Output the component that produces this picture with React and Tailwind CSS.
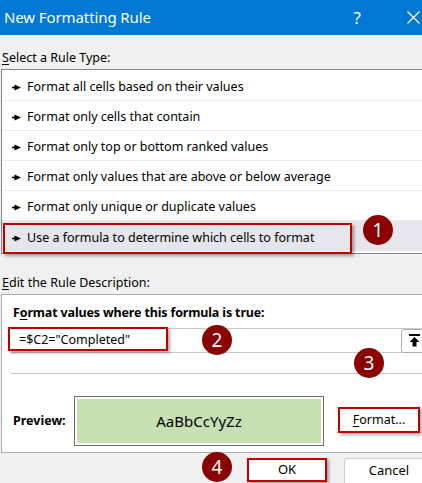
import React from 'react';

const RULES = [
  'Format all cells based on their values',
  'Format only cells that contain',
  'Format only top or bottom ranked values',
  'Format only values that are above or below average',
  'Format only unique or duplicate values',
  'Use a formula to determine which cells to format',
];

function Bullet() {
  return (
    <svg width="9" height="7" viewBox="0 0 9 7" className="shrink-0">
      <path d="M0 3.5 H4" stroke="#000" strokeWidth="1.6" />
      <path d="M2.5 0.5 L9 3.5 L2.5 6.5 Z" fill="#000" />
    </svg>
  );
}

function Marker({ n, className }) {
  return (
    <div
      className={`absolute w-[30px] h-[30px] rounded-full bg-[#8b0000] text-white text-[19px] flex items-center justify-center leading-none ${className}`}
    >
      {n}
    </div>
  );
}

export default function App() {
  return (
    <div
      className="relative w-[422px] h-[483px] overflow-hidden bg-[#f0f0f0] text-[12.5px] text-black"
      style={{ fontFamily: '"Noto Sans", "Open Sans", sans-serif' }}
    >
      {/* title bar */}
      <div className="h-[35px] bg-[#0078d4] text-white flex items-center pl-[4px]">
        <span className="text-[15px] tracking-[-0.1px]">New Formatting Rule</span>
        <span className="ml-auto text-[17px] mr-[46px]">?</span>
        <svg width="13" height="13" viewBox="0 0 13 13" className="mr-[2px]">
          <path d="M0.5 0.5 L12.5 12.5 M12.5 0.5 L0.5 12.5" stroke="#fff" strokeWidth="1.2" />
        </svg>
      </div>

      <div className="pl-[2px] pt-[13px] h-[34px] leading-[20px]">
        <span className="underline underline-offset-2">S</span>elect a Rule Type:
      </div>

      {/* rule list */}
      <div className="ml-[1px] h-[185px] bg-white border border-r-0 border-[#828790] pt-[1px]">
        {RULES.map((r, i) => (
          <div
            key={r}
            className={`h-[30px] flex items-center gap-[6px] pl-[10px] pt-[4px] ${
              i === RULES.length - 1 ? 'bg-[#e5e5eb]' : 'border-b border-[#ececec]'
            }`}
          >
            <Bullet />
            <span>{r}</span>
          </div>
        ))}
      </div>

      <div className="pl-[2px] pt-[19px] h-[40px] leading-[20px]">
        <span className="underline underline-offset-2">E</span>dit the Rule Description:
      </div>

      {/* rule description panel */}
      <div className="ml-[1px] h-[159px] bg-white border border-r-0 border-[#adadad] pl-[9px]">
        <div className="pt-[9px] h-[33px] font-bold text-[12.5px] tracking-[-0.15px] pl-[2px]">
          F<span className="underline underline-offset-2">o</span>rmat values where this formula is true:
        </div>
        <div className="h-[25px] flex items-center border-y border-[#c8c8c8] pl-[8px]">
          <span className="text-[12.5px]">=$C2="Completed"</span>
          <div className="ml-auto h-[24px] w-[26px] shrink-0 bg-white border border-[#adadad] rounded-[3px] flex items-center justify-center -mr-[5px]">
            <svg width="11" height="13" viewBox="0 0 11 13">
              <path d="M0 1 H11" stroke="#000" strokeWidth="2" />
              <path d="M5.5 3 L10.5 8 H7.5 V12.5 H3.5 V8 H0.5 Z" fill="#000" />
            </svg>
          </div>
        </div>
        <div className="h-[21px] border-b border-[#c8c8c8]" />
        <div className="flex items-center pt-[22px]">
          <span className="w-[63px] shrink-0 font-bold text-[12.5px] pl-[2px]">Preview:</span>
          <div className="w-[250px] h-[50px] shrink-0 border border-[#6d6d6d] p-[2px] bg-white">
            <div className="h-full bg-[#c6e0b4] flex items-center justify-center text-[15px]">
              AaBbCcYyZz
            </div>
          </div>
          <button className="ml-[14px] mt-[-2px] w-[82px] h-[26px] shrink-0 bg-white border-2 border-[#c00000] shadow-[2px_2px_3px_rgba(0,0,0,0.35)] text-[12.5px]">
            <span className="underline underline-offset-2">F</span>ormat...
          </button>
        </div>
      </div>

      {/* buttons */}
      <div className="flex pt-[5px]">
        <button className="ml-[247px] w-[80px] h-[24px] shrink-0 bg-white border-2 border-[#c00000] shadow-[2px_2px_3px_rgba(0,0,0,0.35)] text-[13px]">
          OK
        </button>
        <button className="ml-[17px] w-[90px] h-[30px] shrink-0 bg-white border border-[#cccccc] rounded-[3px] text-[13px] pb-[4px]">
          Cancel
        </button>
      </div>

      {/* annotation boxes */}
      <div className="absolute left-[3px] top-[223px] w-[349px] h-[31px] border-2 border-[#c00000] shadow-[2px_2px_3px_rgba(0,0,0,0.35)]" />
      <div className="absolute left-[8px] top-[327px] w-[160px] h-[24px] border-2 border-[#c00000] shadow-[2px_2px_3px_rgba(0,0,0,0.35)]" />

      <Marker n="1" className="left-[363px] top-[215px]" />
      <Marker n="2" className="left-[202px] top-[325px]" />
      <Marker n="3" className="left-[354px] top-[348px]" />
      <Marker n="4" className="left-[202px] top-[452px]" />
    </div>
  );
}
